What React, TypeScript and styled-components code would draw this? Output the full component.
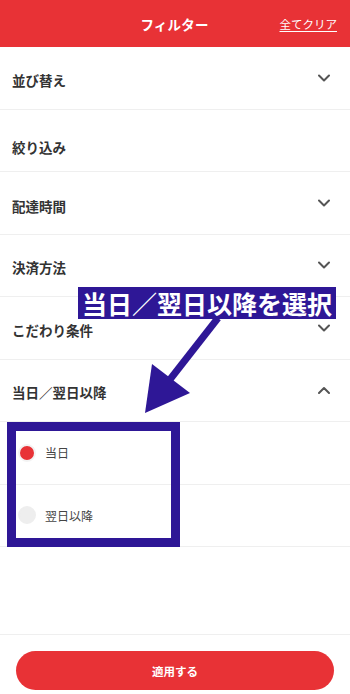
import React from 'react';
import styled, { createGlobalStyle } from 'styled-components';

const GlobalStyle = createGlobalStyle`
  html, body {
    margin: 0;
    padding: 0;
    background: #fff;
  }
  body {
    font-family: "Noto Sans CJK JP", "Noto Sans", sans-serif;
  }
`;

const RED = '#e83236';
const PURPLE = '#2e1796';

const Screen = styled.div`
  position: relative;
  width: 350px;
  height: 694px;
  display: flex;
  flex-direction: column;
  overflow: hidden;
  background: #fff;
`;

const Header = styled.header`
  height: 47px;
  flex: none;
  background: ${RED};
  display: grid;
  grid-template-columns: 1fr auto 1fr;
  align-items: center;
  padding: 0 13px 0 12px;
  color: #fff;
`;

const Title = styled.h1`
  grid-column: 2;
  margin: 0;
  font-size: 13.5px;
  font-weight: 700;
  letter-spacing: 0.2px;
`;

const ClearLink = styled.a`
  justify-self: end;
  font-size: 11.5px;
  color: #fff;
  text-decoration: underline;
  text-underline-offset: 2px;
  cursor: pointer;
`;

const List = styled.div`
  flex: 1;
  display: flex;
  flex-direction: column;
`;

const Row = styled.div<{ $sub?: boolean }>`
  height: 62.5px;
  box-sizing: border-box;
  flex: none;
  display: flex;
  align-items: center;
  justify-content: space-between;
  padding: ${(p) => (p.$sub ? '0 20px 0 18px' : '0 20px 0 12px')};
  border-bottom: 1px solid #efefef;
`;

const RowTitle = styled.span<{ $drop?: number }>`
  margin-top: ${(p) => p.$drop ?? 4}px;
  font-size: 13.5px;
  font-weight: 700;
  color: #333;
`;

const OptionLabel = styled.label`
  display: flex;
  align-items: center;
  gap: 9px;
  font-size: 12px;
  color: #444;
`;

const Radio = styled.span<{ $checked?: boolean }>`
  width: 18px;
  height: 18px;
  box-sizing: border-box;
  border-radius: 50%;
  background: ${(p) => (p.$checked ? RED : '#eeeeee')};
  border: 2px solid ${(p) => (p.$checked ? '#f3f3f3' : '#eeeeee')};
`;

const Footer = styled.div`
  flex: none;
  border-top: 1px solid #efefef;
  padding: 16px 16px 4px;
`;

const ApplyButton = styled.button`
  width: 100%;
  height: 39px;
  border: none;
  border-radius: 20px;
  background: ${RED};
  color: #fff;
  font-family: inherit;
  font-size: 11.5px;
  font-weight: 700;
`;

const Annotation = styled.div`
  position: absolute;
  inset: 0;
  pointer-events: none;
`;

const Callout = styled.div`
  position: absolute;
  left: 78px;
  top: 287px;
  height: 32px;
  padding: 0 4px;
  background: ${PURPLE};
  color: #fff;
  font-size: 25px;
  font-weight: 700;
  line-height: 32px;
  white-space: nowrap;
`;

const Frame = styled.div`
  position: absolute;
  left: 7px;
  top: 422px;
  width: 173px;
  height: 125px;
  box-sizing: border-box;
  border: 9px solid ${PURPLE};
`;

const ArrowSvg = styled.svg`
  position: absolute;
  left: 0;
  top: 0;
`;

const Chevron = ({ up }: { up?: boolean }) => (
  <svg width="12" height="8" viewBox="0 0 12 8">
    <path
      d={up ? 'M1 7 L6 2 L11 7' : 'M1 1.5 L6 6.5 L11 1.5'}
      fill="none"
      stroke="#555"
      strokeWidth="2"
      strokeLinecap="round"
      strokeLinejoin="round"
    />
  </svg>
);

const sections = [
  { title: '並び替え', chevron: true, drop: 4 },
  { title: '絞り込み', chevron: false, drop: 14 },
  { title: '配達時間', chevron: true, drop: 6 },
  { title: '決済方法', chevron: true, drop: 4 },
  { title: 'こだわり条件', chevron: true, drop: 4 },
];

const options = [
  { label: '当日', checked: true },
  { label: '翌日以降', checked: false },
];

export default function App() {
  return (
    <>
      <GlobalStyle />
      <Screen>
        <Header>
          <Title>フィルター</Title>
          <ClearLink>全てクリア</ClearLink>
        </Header>
        <List>
          {sections.map((s) => (
            <Row key={s.title}>
              <RowTitle $drop={s.drop}>{s.title}</RowTitle>
              {s.chevron && <Chevron />}
            </Row>
          ))}
          <Row>
            <RowTitle>当日／翌日以降</RowTitle>
            <Chevron up />
          </Row>
          {options.map((o) => (
            <Row key={o.label} $sub>
              <OptionLabel>
                <Radio $checked={o.checked} />
                {o.label}
              </OptionLabel>
            </Row>
          ))}
        </List>
        <Footer>
          <ApplyButton>適用する</ApplyButton>
        </Footer>
        <Annotation>
          <Callout>当日／翌日以降を選択</Callout>
          <ArrowSvg width="350" height="694" viewBox="0 0 350 694">
            <line x1="218" y1="318" x2="168" y2="382" stroke={PURPLE} strokeWidth="7" />
            <polygon points="145,413 152,364 190,393" fill={PURPLE} />
          </ArrowSvg>
          <Frame />
        </Annotation>
      </Screen>
    </>
  );
}
